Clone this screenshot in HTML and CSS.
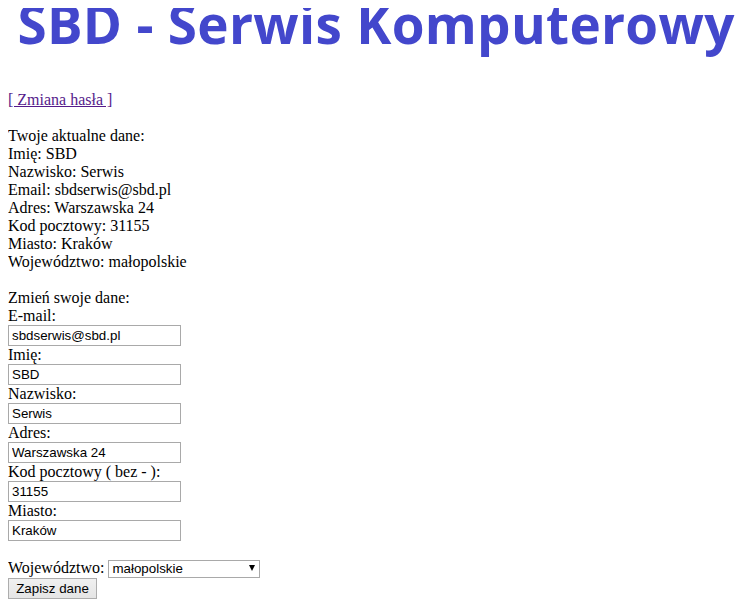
FILE: index.html
```html
<!DOCTYPE html>
<html lang="pl">
<head>
<meta charset="utf-8">
<title>SBD - Serwis Komputerowy</title>
<link rel="stylesheet" href="styles.css">
</head>
<body>
<div class="title">SBD - Serwis Komputerowy</div>
<a class="link" href="#">[ Zmiana hasła ]</a><br><br>
Twoje aktualne dane:<br>
Imię: SBD<br>
Nazwisko: Serwis<br>
Email: sbdserwis@sbd.pl<br>
Adres: Warszawska 24<br>
Kod pocztowy: 31155<br>
Miasto: Kraków<br>
Województwo: małopolskie<br>
<br>
Zmień swoje dane:<br>
<form class="form">
E-mail:<br><input class="field" type="text" value="sbdserwis@sbd.pl"><br>
Imię:<br><input class="field" type="text" value="SBD"><br>
Nazwisko:<br><input class="field" type="text" value="Serwis"><br>
Adres:<br><input class="field" type="text" value="Warszawska 24"><br>
Kod pocztowy ( bez - ):<br><input class="field" type="text" value="31155"><br>
Miasto:<br><input class="field" type="text" value="Kraków"><br>
<br>
Województwo: <span class="select-wrap"><select class="select"><option>małopolskie</option></select></span><br>
<button class="btn" type="button">Zapisz dane</button>
</form>
</body>
</html>
```
FILE: styles.css
```css
html, body {
  margin: 0;
  padding: 0;
  background: #fff;
}
body {
  margin: 8px;
  font-family: "Liberation Serif", "Times New Roman", serif;
  font-size: 16px;
  color: #000;
}
.title {
  height: 83px;
  font-family: "Open Sans", "Noto Sans", sans-serif;
  font-weight: 700;
  font-size: 53px;
  line-height: 32px;
  letter-spacing: 0.3px;
  color: #4347cc;
  text-align: center;
  white-space: nowrap;
  padding-left: 6px;
}
.link {
  color: #551a8b;
  text-decoration: underline;
}
.form {
  margin: 0;
}
.field {
  box-sizing: border-box;
  width: 173px;
  height: 21px;
  margin: 0;
  padding: 1px 3px;
  border: 1px solid #a9a9a9;
  font-family: "Liberation Sans", Arial, sans-serif;
  font-size: 13.333px;
  color: #000;
  background: #fff;
  vertical-align: baseline;
}
.select-wrap {
  position: relative;
  display: inline-block;
}
.select-wrap::after {
  content: "";
  position: absolute;
  right: 5px;
  top: 6px;
  border-left: 3.5px solid transparent;
  border-right: 3.5px solid transparent;
  border-top: 6px solid #000;
  pointer-events: none;
}
.select {
  -webkit-appearance: none;
  appearance: none;
  box-sizing: border-box;
  width: 152px;
  height: 18px;
  margin: 0;
  padding: 0 3px;
  border: 1px solid #a9a9a9;
  border-radius: 0;
  background: #fff;
  font-family: "Liberation Sans", Arial, sans-serif;
  font-size: 13.333px;
  color: #000;
}
.btn {
  box-sizing: border-box;
  width: 89px;
  height: 21px;
  margin: 0;
  padding: 0 6px;
  border: 1px solid #adadad;
  border-radius: 0;
  background: linear-gradient(#f0f0f0, #e5e5e5);
  font-family: "Liberation Sans", Arial, sans-serif;
  font-size: 13.333px;
  color: #000;
}
```
